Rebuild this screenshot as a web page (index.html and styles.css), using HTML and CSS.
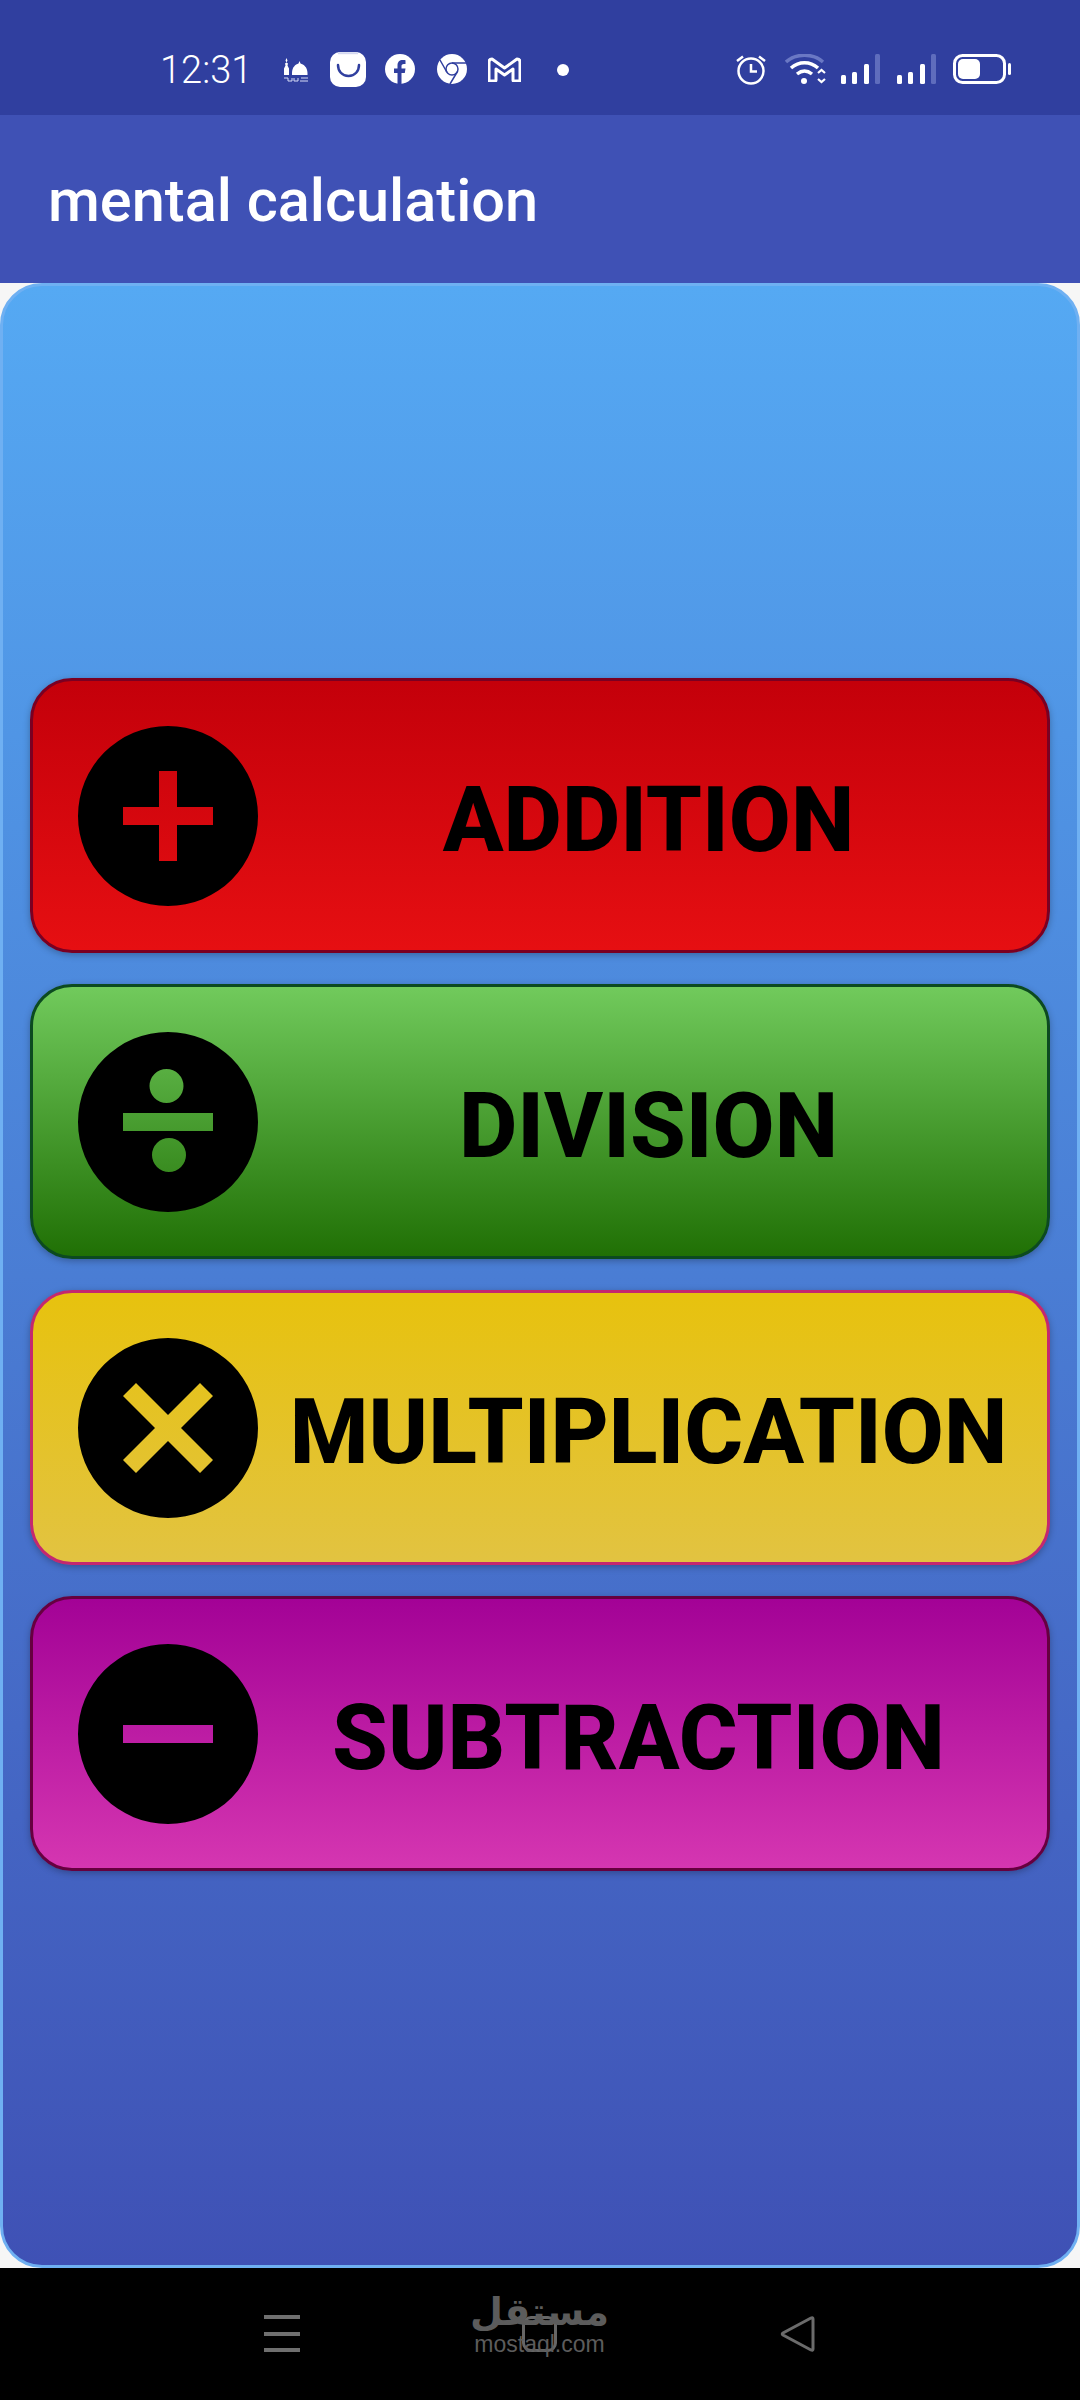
FILE: index.html
```html
<!DOCTYPE html>
<html lang="en">
<head>
<meta charset="utf-8">
<title>mental calculation</title>
<link rel="stylesheet" href="styles.css">
</head>
<body>
<div class="screen">
  <header class="status">
    <span class="time">12:31</span>
    <svg class="ic mosque" viewBox="0 0 24 24"><path d="M2.500 0l1 2.500-1 2 1.500 1-.5 2 1.500 3v6.500H0V10.500l1.500-3-.5-2 1.500-1-1-2zM15.500 3l1 2.500c3 1 7 3.500 7 9.500v2H8V15c0-6 3.500-8.500 6.500-9.500z" fill="#fff"/><path d="M0 20h4v3h4v-3M10 20v3h4v-3M16 23h8M17 20h7" fill="none" stroke="#d5dbf5" stroke-width="1"/></svg>
    <svg class="ic bag" viewBox="0 0 36 35"><rect width="36" height="35" rx="10" fill="#fff"/><path d="M8 1.200h20" stroke="#d4d8f0" stroke-width="2"/><path d="M8 13c0 6 4 11 10.500 11S29 19 29 13" fill="none" stroke="#303f9f" stroke-width="2.500" stroke-linecap="round"/></svg>
    <svg class="ic fb" viewBox="0 0 30 30"><circle cx="15" cy="15" r="15" fill="#fff"/><path d="M12.500 30V19H9v-4.500h3.500v-3c0-3.700 2-5.500 5.300-5.500 1.300 0 2.700.2 2.700.2v3.800h-1.700c-1.800 0-2.300 1-2.300 2.200v2.300h4l-.7 4.500h-3.300v11z" fill="#303f9f"/></svg>
    <svg class="ic chrome" viewBox="0 0 30 30"><circle cx="15" cy="15" r="15" fill="#fff"/><circle cx="15" cy="15" r="6" fill="#fff" stroke="#303f9f" stroke-width="1.500"/><path d="M15 9h14M9.800 18 3 6M20.200 18 13 30" fill="none" stroke="#303f9f" stroke-width="1.500"/></svg>
    <svg class="ic gm" viewBox="0 0 33 25"><path d="M4 2l12.500 9L29 2q3 0 3 3v18q0 1-1 1h-5q-1 0-1-1V12l-8.500 6L8 12v11q0 1-1 1H2q-1 0-1-1V5q0-3 3-3z" fill="none" stroke="#fff" stroke-width="3" stroke-linejoin="round"/></svg>
    <span class="dot"></span>
    <svg class="ic alarm" viewBox="0 0 30 31"><circle cx="15" cy="17" r="12.500" fill="none" stroke="#fff" stroke-width="2.500"/><path d="M15 10v7.500h6" fill="none" stroke="#fff" stroke-width="2.500"/><path d="M1 7l6-4.500M29 7l-6-4.500" stroke="#fff" stroke-width="2.500"/></svg>
    <svg class="ic wifi" viewBox="0 0 41 30"><path d="M1 8c10-9 27-9 37 0" fill="none" stroke="#6a78c4" stroke-width="3.500"/><path d="M6 14c8-7 19-7 27 0M12 20c5-4 10-4 15 0" fill="none" stroke="#fff" stroke-width="3.500"/><circle cx="19" cy="27" r="3" fill="#fff"/><path d="M33 19l3.500-3 3.500 3M33 25l3.500 3 3.500-3" fill="none" stroke="#fff" stroke-width="2.200"/></svg>
    <div class="signal sig1"><i class="b1"></i><i class="b2"></i><i class="b3"></i><i class="b4"></i></div>
    <div class="signal sig2"><i class="b1"></i><i class="b2"></i><i class="b3"></i><i class="b4"></i></div>
    <svg class="ic batt" viewBox="0 0 58 30"><rect x="1.500" y="1.500" width="50" height="27" rx="8" fill="none" stroke="#fff" stroke-width="3"/><rect x="5" y="5" width="22" height="20" rx="5" fill="#fff"/><rect x="55" y="9" width="3" height="12" rx="1.500" fill="#fff"/></svg>
  </header>
  <div class="appbar"><h1 class="title">mental calculation</h1></div>
  <main class="panel">
    <button class="card add">
      <svg class="op" viewBox="0 0 180 180"><path fill-rule="evenodd" d="M0 90a90 90 0 1 0 180 0a90 90 0 1 0-180 0zM81 45v36H45v18h36v36h18V99h36V81H99V45z"/></svg>
      <span class="label">ADDITION</span>
    </button>
    <button class="card div">
      <svg class="op" viewBox="0 0 180 180"><path fill-rule="evenodd" d="M0 90a90 90 0 1 0 180 0a90 90 0 1 0-180 0zM45 81v18h90V81zM71.500 54a17 17 0 1 0 34 0a17 17 0 1 0-34 0zM74 123a17 17 0 1 0 34 0a17 17 0 1 0-34 0z"/></svg>
      <span class="label">DIVISION</span>
    </button>
    <button class="card mul">
      <svg class="op" viewBox="0 0 180 180"><path fill-rule="evenodd" d="M0 90a90 90 0 1 0 180 0a90 90 0 1 0-180 0zM58 45 90 77 122 45 135 58 103 90 135 122 122 135 90 103 58 135 45 122 77 90 45 58z"/></svg>
      <span class="label">MULTIPLICATION</span>
    </button>
    <button class="card sub">
      <svg class="op" viewBox="0 0 180 180"><path fill-rule="evenodd" d="M0 90a90 90 0 1 0 180 0a90 90 0 1 0-180 0zM45 81v18h90V81z"/></svg>
      <span class="label label-sub">SUBTRACTION</span>
    </button>
  </main>
  <nav class="nav">
    <div class="menu"><i></i><i></i><i></i></div>
    <div class="home"></div>
    <svg class="back" viewBox="0 0 36 36"><path d="M33 3v30q0 2-2 1L3 19q-1.500-1 0-2L31 2q2-1 2 1z" fill="none" stroke="#6b6b6b" stroke-width="3"/></svg>
    <div class="mark"><span class="mark-ar" lang="ar" dir="rtl">مستقل</span><span class="mark-en">mostaql.com</span></div>
  </nav>
</div>
</body>
</html>
```

FILE: styles.css
```css
* { box-sizing: border-box; }
html, body { margin: 0; padding: 0; }
body { font-family: Roboto, "Liberation Sans", sans-serif; background: #f6f6f6; }
.screen { width: 1080px; height: 2400px; display: flex; flex-direction: column; overflow: hidden; }

.status { height: 115px; flex: none; background: #303f9f; display: flex; align-items: center; color: #fff; padding-top: 23px; }
.time { margin-left: 160px; width: 87px; font-size: 38px; font-weight: 300; line-height: 1; white-space: nowrap; position: relative; top: 1px; }
.ic { display: block; flex: none; }
.mosque { width: 24px; height: 24px; margin-left: 37px; position: relative; top: 1px; }
.bag { width: 36px; height: 35px; margin-left: 22px; }
.fb { width: 30px; height: 30px; margin-left: 19px; }
.chrome { width: 30px; height: 30px; margin-left: 22px; }
.gm { width: 33px; height: 25px; margin-left: 21px; }
.dot { width: 12px; height: 12px; border-radius: 50%; background: #fff; margin-left: 36px; flex: none; position: relative; top: 1px; }
.alarm { width: 30px; height: 31px; margin-left: 167px; }
.wifi { width: 41px; height: 30px; margin-left: 19px; }
.signal { width: 39px; height: 30px; display: flex; align-items: flex-end; justify-content: space-between; }
.sig1 { margin-left: 15px; }
.sig2 { margin-left: 17px; }
.signal i { width: 5px; background: #fff; border-radius: 1.500px; }
.signal .b1 { height: 9px; }
.signal .b2 { height: 12px; }
.signal .b3 { height: 20px; }
.signal .b4 { height: 30px; background: #5f6dbd; }
.batt { width: 58px; height: 30px; margin-left: 17px; }

.appbar { height: 168px; flex: none; background: #3f51b5; display: flex; align-items: center; padding-left: 48px; }
.title { margin: 0; font-size: 59.500px; font-weight: 500; color: #fff; line-height: 1; white-space: nowrap; position: relative; top: 3px; }

.panel {
  flex: 1;
  border: 3px solid #6fb0f2;
  border-radius: 42px;
  background: linear-gradient(180deg, #55a9f3 0%, #3f51b5 100%);
  padding: 392px 27px 0;
  display: flex;
  flex-direction: column;
  gap: 31px;
}
.card {
  width: 1020px;
  height: 275px;
  flex: none;
  margin: 0;
  padding: 0 0 0 45px;
  border-width: 3px;
  border-style: solid;
  border-radius: 42px;
  display: flex;
  align-items: center;
  box-shadow: 0 2px 7px rgba(0, 0, 0, .28);
  font-family: inherit;
  color: #000;
}
.add { background: linear-gradient(180deg, #c4000a, #e60f12); border-color: #7a0022; }
.div { background: linear-gradient(180deg, #71ca5c, #207005); border-color: #0c4a20; }
.mul { background: linear-gradient(180deg, #e7c20e, #e2c341); border-color: #c4286f; }
.sub { background: linear-gradient(180deg, #a30296, #d536b1); border-color: #66003f; }
.op { width: 180px; height: 180px; flex: none; display: block; fill: #000; filter: blur(.6px); }
.label { flex: 1; text-align: center; margin-right: 8px; font-size: 90px; font-weight: 850; line-height: 1; white-space: nowrap; position: relative; top: 5px; }
.label-sub { margin-right: 28px; }

.nav { height: 132px; flex: none; background: #000; position: relative; display: flex; align-items: flex-start; }
.menu { width: 36px; height: 37px; margin: 47px 0 0 264px; display: flex; flex-direction: column; justify-content: space-between; flex: none; }
.menu i { display: block; height: 4px; background: #6f6f6f; }
.home { width: 35px; height: 36px; margin: 48px 0 0 222px; border: 3px solid #666; border-radius: 9px; flex: none; }
.back { width: 36px; height: 36px; margin: 48px 0 0 223px; flex: none; display: block; }
.mark { position: absolute; left: 474px; top: 24px; width: 131px; display: flex; flex-direction: column; align-items: center; color: #5c5c5c; }
.mark-ar { font-family: "DejaVu Sans", sans-serif; font-weight: 700; font-size: 38px; line-height: 40px; white-space: nowrap; }
.mark-en { font-family: "Liberation Sans", sans-serif; font-size: 23px; line-height: 18px; white-space: nowrap; margin-top: 3px; }
```
